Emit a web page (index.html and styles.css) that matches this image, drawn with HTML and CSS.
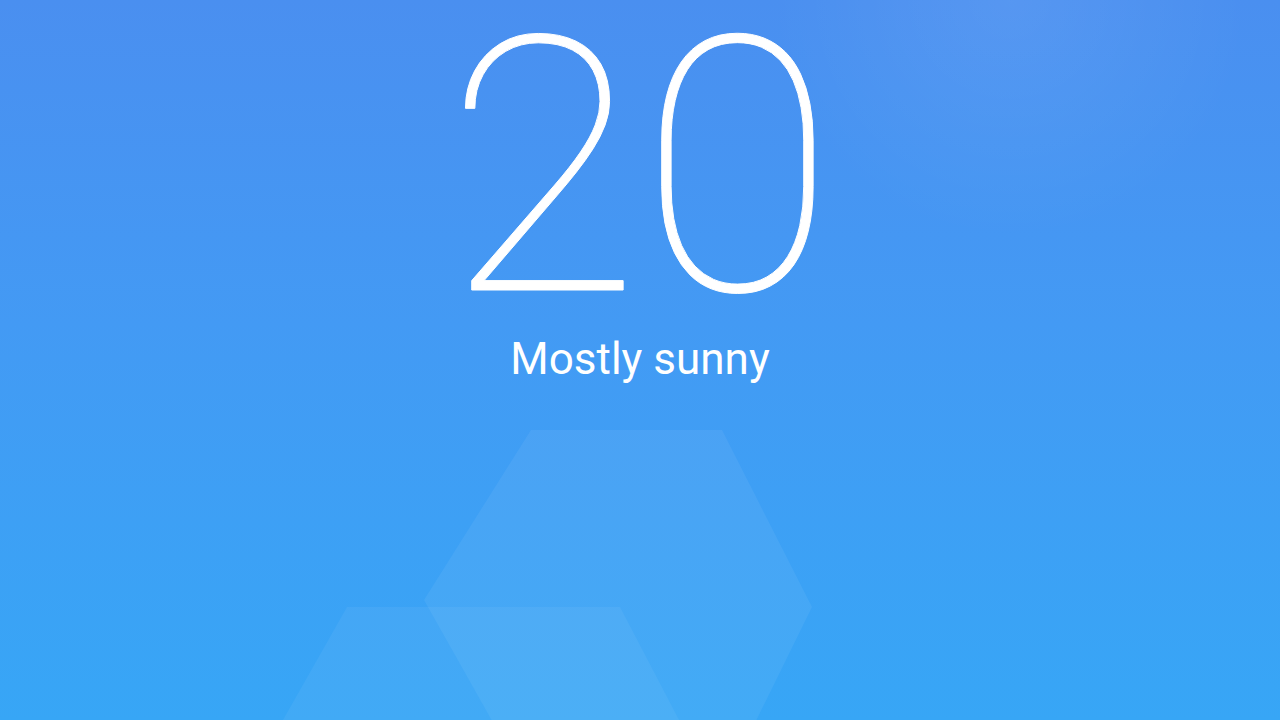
FILE: index.html
```html
<!DOCTYPE html>
<html lang="en">
<head>
    <meta charset="UTF-8">
    <meta name="viewport" content="width=device-width, initial-scale=1.0">
    <title>Weather</title>
    <link rel="stylesheet" href="styles.css">
</head>
<body>
    <div class="sky">
        <!-- faint shapes behind the text -->
        <svg class="decor" width="1280" height="720" viewBox="0 0 1280 720">
            <defs>
                <radialGradient id="glow" cx="1010" cy="0" r="240" gradientUnits="userSpaceOnUse">
                    <stop offset="0" stop-color="#ffffff" stop-opacity="0.07"/>
                    <stop offset="1" stop-color="#ffffff" stop-opacity="0"/>
                </radialGradient>
            </defs>
            <rect x="0" y="0" width="1280" height="720" fill="url(#glow)"/>
            <polygon class="hex" points="531,430 722,430 812,607 722,790 531,790 424,600"/>
            <polygon class="hex hex2" points="347,607 620,607 700,760 620,900 347,900 266,750"/>
        </svg>
        <main class="now">
            <div class="temp">20</div>
            <div class="cond">Mostly sunny</div>
        </main>
    </div>
</body>
</html>
```
FILE: styles.css
```css
body{
    margin: 0;
    padding: 0;
    font-family: Roboto, "Noto Sans", sans-serif;
    color: #fff;
}
.sky{
    position: relative;
    width: 100%;
    height: 720px;
    overflow: hidden;
    background: linear-gradient(180deg, #4a8ff0 0%, #439af4 45%, #37a6f6 100%);
}
.decor{
    position: absolute;
    top: 0;
    left: 0;
}
.hex{
    fill: #ffffff;
    fill-opacity: 0.06;
}
.hex2{
    fill-opacity: 0.05;
}
.now{
    position: relative;
    display: flex;
    flex-direction: column;
    align-items: center;
    padding-top: 19px;
}
.temp{
    font-size: 356px;
    font-weight: 100;
    line-height: 300px;
    -webkit-text-stroke: 1px #fff;
}
.cond{
    margin-top: 14px;
    font-size: 44px;
    line-height: 52px;
}
```
